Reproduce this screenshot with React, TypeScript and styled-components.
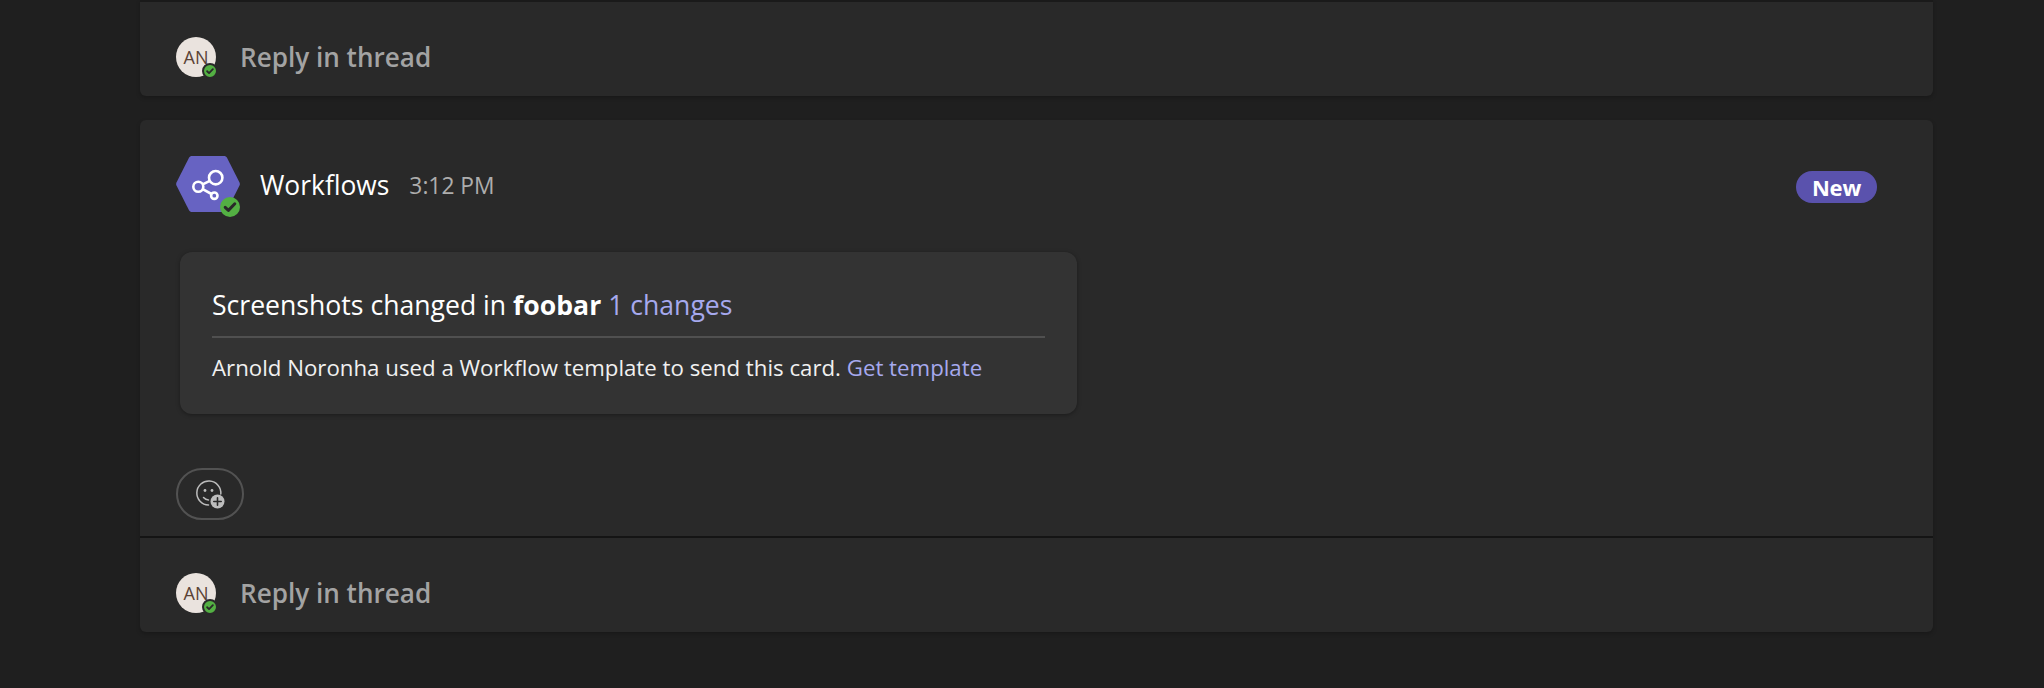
import React from "react";
import styled, { createGlobalStyle } from "styled-components";

const Global = createGlobalStyle`
  html, body { margin: 0; padding: 0; background: #1f1f1f; }
  body { font-family: "Open Sans", "Noto Sans", "Liberation Sans", sans-serif; }
`;

const Page = styled.div`
  width: 2044px;
  height: 688px;
  overflow: hidden;
  box-sizing: border-box;
  padding: 0 111px 0 140px;
  display: flex;
  flex-direction: column;
  gap: 24px;
  background: #1f1f1f;
`;

const ThreadCard = styled.section<{ $top?: boolean }>`
  background: #292929;
  border-radius: ${(p) => (p.$top ? "0 0 6px 6px" : "6px")};
  border-top: ${(p) => (p.$top ? "2px solid #1a1a1a" : "none")};
  box-shadow: 0 2px 4px rgba(0, 0, 0, 0.22);
  display: flex;
  flex-direction: column;
`;

const Message = styled.div`
  height: 416px;
  box-sizing: border-box;
  padding: 36px 36px 16px;
  display: flex;
  flex-direction: column;
`;

const Header = styled.header`
  display: flex;
  align-items: center;
  height: 56px;
`;

const HexWrap = styled.div`
  position: relative;
  width: 64px;
  height: 56px;
  flex: none;
`;

const Name = styled.span`
  margin-left: 20px;
  margin-top: 2px;
  font-size: 26.4px;
  color: #fff;
`;

const Time = styled.span`
  margin-left: 20px;
  margin-top: 2px;
  font-size: 22.8px;
  color: #adadad;
`;

const NewBadge = styled.span`
  margin-left: auto;
  margin-right: 20px;
  width: 81px;
  height: 32px;
  margin-top: 6px;
  padding-bottom: 1px;
  box-sizing: border-box;
  border-radius: 16px;
  background: #5a52ad;
  color: #fff;
  font-size: 22px;
  font-weight: 700;
  letter-spacing: -0.2px;
  display: flex;
  align-items: center;
  justify-content: center;
`;

const AdaptiveCard = styled.article`
  margin: 40px 0 0 4px;
  width: 897px;
  height: 162px;
  box-sizing: border-box;
  padding: 0 32px;
  background: #333333;
  border-radius: 12px;
  box-shadow: 0 1px 4px rgba(0, 0, 0, 0.35);
  display: flex;
  flex-direction: column;
`;

const CardTitle = styled.div`
  height: 86px;
  box-sizing: border-box;
  padding-top: 35px;
  line-height: 36px;
  font-size: 26.6px;
  color: #fff;
  border-bottom: 2px solid #505050;
  white-space: nowrap;
  strong { font-weight: 700; }
`;

const CardBody = styled.div`
  margin-top: 14px;
  line-height: 32px;
  font-size: 22.25px;
  color: #f0f0f0;
  white-space: nowrap;
`;

const Link = styled.a`
  color: #a6a9ee;
`;

const ReactButton = styled.button`
  margin-top: 54px;
  width: 68px;
  height: 52px;
  padding: 0;
  box-sizing: border-box;
  border: 2px solid #525252;
  border-radius: 26px;
  background: transparent;
  display: flex;
  align-items: center;
  justify-content: center;
`;

const Reply = styled.div<{ $divided?: boolean }>`
  height: ${(p) => (p.$divided ? "96px" : "94px")};
  box-sizing: border-box;
  padding: 35px 36px 0;
  display: flex;
  align-items: flex-start;
  border-top: ${(p) => (p.$divided ? "2px solid #141414" : "none")};
`;

const Avatar = styled.div`
  position: relative;
  width: 40px;
  height: 40px;
  flex: none;
  border-radius: 50%;
  background: #eae3de;
  color: #5a4235;
  font-size: 18px;
  display: flex;
  align-items: center;
  justify-content: center;
`;

const Presence = styled.span<{ $size: number; $offset: number; $ring?: boolean }>`
  position: absolute;
  right: ${(p) => (p.$ring ? "-2px" : "0")};
  bottom: ${(p) => p.$offset}px;
  width: ${(p) => p.$size}px;
  height: ${(p) => p.$size}px;
  box-sizing: content-box;
  border-radius: 50%;
  background: #53b043;
  border: ${(p) => (p.$ring ? "2px solid #292929" : "none")};
  display: flex;
  align-items: center;
  justify-content: center;
`;

const ReplyText = styled.span`
  margin-left: 24px;
  line-height: 41px;
  font-size: 26.1px;
  font-weight: 600;
  color: #a3a3a3;
`;

const Check = ({ size }: { size: number }) => (
  <svg width={size} height={size} viewBox="0 0 10 10" fill="none">
    <path d="M2.6 5.2 4.2 6.7 7.4 3.4" stroke="#292929" strokeWidth="1.5" strokeLinecap="round" strokeLinejoin="round" />
  </svg>
);

const Hexagon = () => (
  <svg width="64" height="56" viewBox="0 0 64 56">
    <path
      d="M13 1.8C13.7.6 14.7 0 16 0h32c1.3 0 2.3.6 3 1.8l12.4 24.4c.6 1.2.6 2.4 0 3.6L51 54.2c-.7 1.2-1.7 1.8-3 1.8H16c-1.3 0-2.3-.6-3-1.8L.6 29.8c-.6-1.2-.6-2.4 0-3.6z"
      fill="#6763c2"
    />
    <g fill="none" stroke="#fff" strokeWidth="2.6">
      <circle cx="39.7" cy="21.7" r="6.7" />
      <circle cx="22.3" cy="30.7" r="5" />
      <circle cx="38.3" cy="39.7" r="3.2" />
      <path d="M26.7 28.4 33.8 24.8M26.7 33.2 35.5 38" />
    </g>
  </svg>
);

const SmileAdd = () => (
  <svg width="30" height="30" viewBox="0 0 30 30" fill="none">
    <path d="M13.5 26A12 12 0 1 1 25.8 15" stroke="#bdbdbd" strokeWidth="1.5" strokeLinecap="round" />
    <circle cx="10" cy="11.5" r="1.4" fill="#bdbdbd" />
    <circle cx="17" cy="11.5" r="1.4" fill="#bdbdbd" />
    <path d="M8.5 18.5c1.4 1.6 3 2.4 5 2.4" stroke="#bdbdbd" strokeWidth="1.5" strokeLinecap="round" />
    <circle cx="22.5" cy="22.5" r="7" fill="#bdbdbd" />
    <path d="M22.5 18.8v7.4M18.8 22.5h7.4" stroke="#292929" strokeWidth="1.6" strokeLinecap="round" />
  </svg>
);

const ReplyRow = ({ divided }: { divided?: boolean }) => (
  <Reply $divided={divided}>
    <Avatar>
      AN
      <Presence $size={12} $offset={-2} $ring>
        <Check size={12} />
      </Presence>
    </Avatar>
    <ReplyText>Reply in thread</ReplyText>
  </Reply>
);

export default function App() {
  return (
    <Page>
      <Global />
      <ThreadCard $top>
        <ReplyRow />
      </ThreadCard>
      <ThreadCard>
        <Message>
          <Header>
            <HexWrap>
              <Hexagon />
              <Presence $size={20} $offset={-5}>
                <Check size={20} />
              </Presence>
            </HexWrap>
            <Name>Workflows</Name>
            <Time>3:12 PM</Time>
            <NewBadge>New</NewBadge>
          </Header>
          <AdaptiveCard>
            <CardTitle>
              Screenshots changed in <strong>foobar</strong> <Link>1 changes</Link>
            </CardTitle>
            <CardBody>
              Arnold Noronha used a Workflow template to send this card. <Link>Get template</Link>
            </CardBody>
          </AdaptiveCard>
          <ReactButton aria-label="Add reaction">
            <SmileAdd />
          </ReactButton>
        </Message>
        <ReplyRow divided />
      </ThreadCard>
    </Page>
  );
}
